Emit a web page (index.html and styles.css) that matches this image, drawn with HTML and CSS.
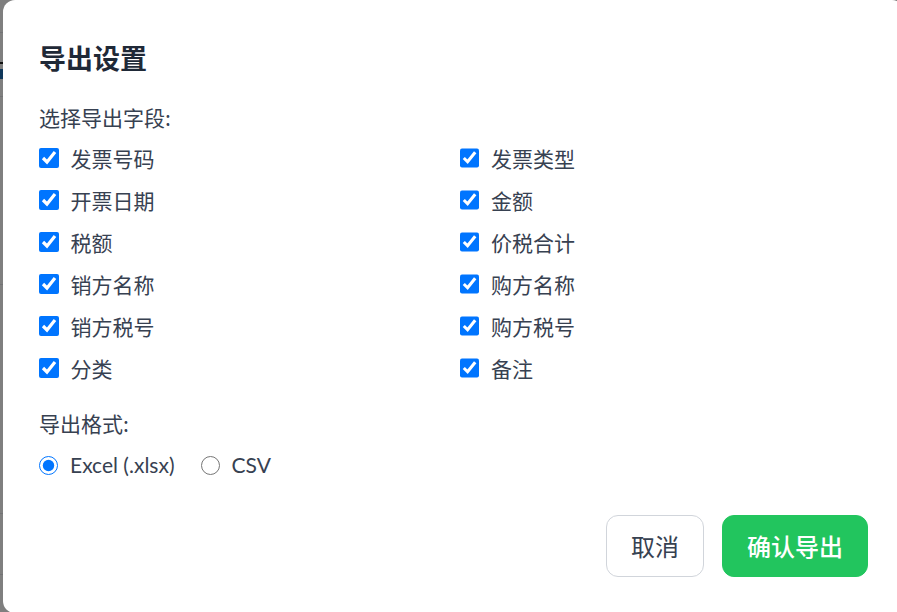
FILE: index.html
```html
<!DOCTYPE html>
<html lang="zh-CN">
<head>
<meta charset="utf-8">
<title>导出设置</title>
<link rel="stylesheet" href="styles.css">
</head>
<body>
<div class="page">
  <div class="page-row r1"></div>
  <div class="page-row r2"><span class="chip"></span></div>
  <div class="page-row r3"></div>
  <div class="page-row r4"></div>
  <div class="page-row r5"></div>
  <div class="page-row r6"></div>
</div>
<div class="backdrop"></div>
<div class="modal" role="dialog" aria-labelledby="dlg-title">
  <h2 class="modal-title" id="dlg-title">导出设置</h2>
  <div class="section-label">选择导出字段:</div>
  <div class="field-grid">
    <label class="opt"><input type="checkbox" checked><span>发票号码</span></label>
    <label class="opt"><input type="checkbox" checked><span>发票类型</span></label>
    <label class="opt"><input type="checkbox" checked><span>开票日期</span></label>
    <label class="opt"><input type="checkbox" checked><span>金额</span></label>
    <label class="opt"><input type="checkbox" checked><span>税额</span></label>
    <label class="opt"><input type="checkbox" checked><span>价税合计</span></label>
    <label class="opt"><input type="checkbox" checked><span>销方名称</span></label>
    <label class="opt"><input type="checkbox" checked><span>购方名称</span></label>
    <label class="opt"><input type="checkbox" checked><span>销方税号</span></label>
    <label class="opt"><input type="checkbox" checked><span>购方税号</span></label>
    <label class="opt"><input type="checkbox" checked><span>分类</span></label>
    <label class="opt"><input type="checkbox" checked><span>备注</span></label>
  </div>
  <div class="section-label format-label">导出格式:</div>
  <div class="format-row">
    <label class="opt"><input type="radio" name="fmt" checked><span class="latin">Excel (.xlsx)</span></label>
    <label class="opt"><input type="radio" name="fmt"><span class="latin">CSV</span></label>
  </div>
  <div class="actions">
    <button class="btn btn-cancel" type="button">取消</button>
    <button class="btn btn-confirm" type="button">确认导出</button>
  </div>
</div>
</body>
</html>
```
FILE: styles.css
```css
* { box-sizing: border-box; }
html, body {
  margin: 0;
  height: 100%;
  overflow: hidden;
}
body {
  background: #ffffff;
  font-family: "Noto Sans CJK SC", "Noto Sans", sans-serif;
}
.page {
  display: flex;
  flex-direction: column;
}
.page-row { width: 100%; border-bottom: 1px solid #e5e7eb; }
.r1 { height: 33px; }
.r2 { height: 31px; border-bottom: 2px solid #222; }
.chip { display: block; width: 3px; height: 10px; margin-top: 36px; background: #1e6fb5; }
.r3 { height: 33px; }
.r4 { height: 188px; }
.r5 { height: 229px; }
.r6 { height: 61px; }

.backdrop {
  position: fixed;
  inset: 0;
  background: rgba(0, 0, 0, 0.5);
}
.modal {
  position: fixed;
  left: 3px;
  top: 0;
  width: 901px;
  height: 613px;
  background: #ffffff;
  border-radius: 12px;
  padding: 38px 36px 0 36px;
  color: #374151;
}
.modal-title {
  margin: 0;
  font-size: 27px;
  line-height: 40px;
  font-weight: 700;
  color: #1f2937;
}
.section-label {
  margin-top: 24px;
  font-size: 21px;
  line-height: 30px;
  color: #374151;
}
.field-grid {
  margin-top: 11px;
  display: grid;
  grid-template-columns: 1fr 1fr;
  column-gap: 12px;
  row-gap: 12px;
}
.opt {
  display: flex;
  align-items: center;
  gap: 12px;
  height: 30px;
  font-size: 21px;
  line-height: 30px;
  color: #374151;
}
.latin {
  font-family: Lato, "Noto Sans CJK SC", sans-serif;
}
.opt input[type="checkbox"] {
  width: 19.5px;
  height: 19.5px;
  margin: 0;
  flex: none;
}
.opt input[type="radio"] {
  width: 19px;
  height: 19px;
  margin: 0;
  flex: none;
}
.format-label { margin-top: 25px; }
.format-row {
  margin-top: 12px;
  display: flex;
  gap: 26px;
}
.actions {
  margin-top: 35px;
  display: flex;
  justify-content: flex-end;
  gap: 18px;
}
.btn {
  font-family: "Noto Sans CJK SC", "Noto Sans", sans-serif;
  font-size: 24px;
  line-height: 36px;
  padding: 12px 24px;
  border-radius: 12px;
  border: 1px solid transparent;
  cursor: pointer;
}
.btn-cancel {
  background: #ffffff;
  border-color: #d1d5db;
  color: #374151;
  font-weight: 400;
}
.btn-confirm {
  background: #22c55e;
  border-color: #22c55e;
  color: #ffffff;
  font-weight: 500;
}
```
